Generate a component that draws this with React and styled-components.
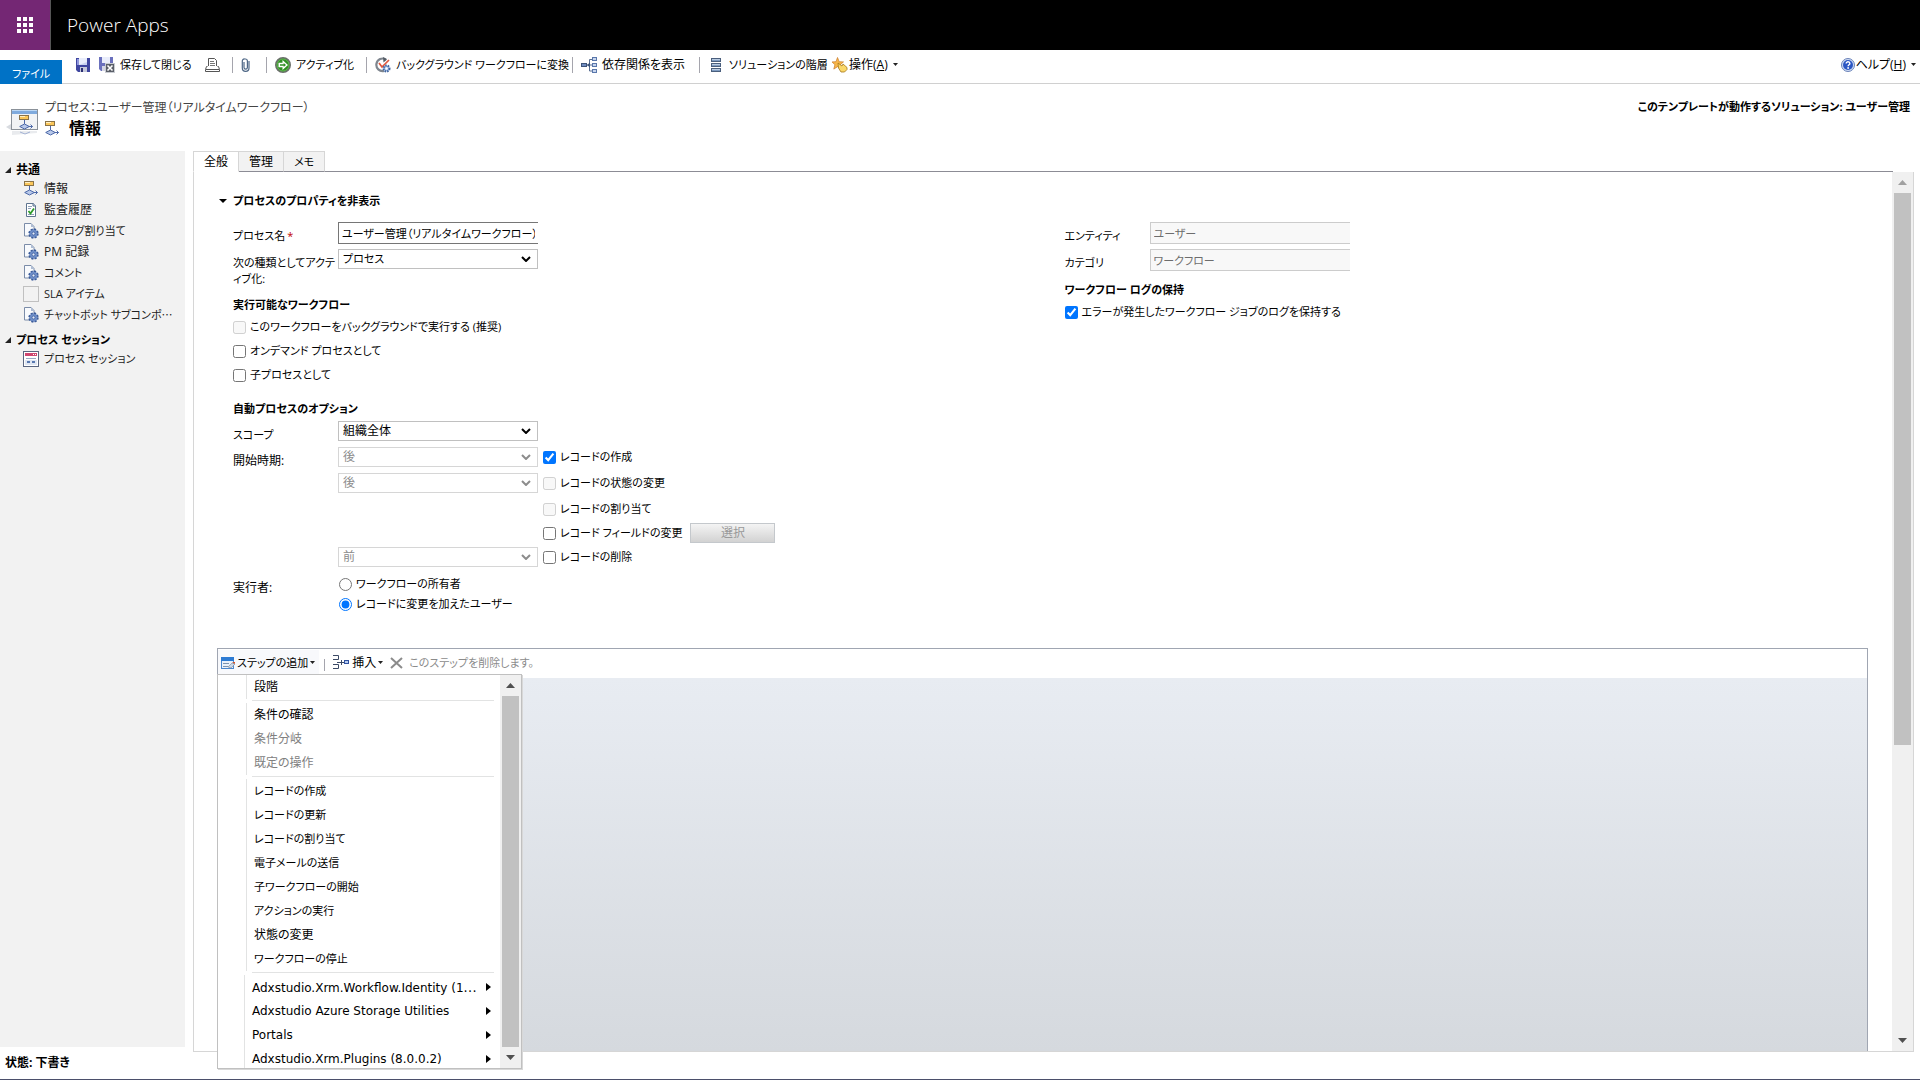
import React, { useState } from "react";
import styled, { createGlobalStyle, css } from "styled-components";

const commonLinks = [
	{ icon: "flow", label: "情報" },
	{ icon: "audit", label: "監査履歴" },
	{ icon: "gear", label: "カタログ割り当て" },
	{ icon: "gear", label: "PM 記録" },
	{ icon: "gear", label: "コメント" },
	{ icon: "empty", label: "SLA アイテム" },
	{ icon: "gear", label: "チャットボット サブコンポ", more: true },
];

const stepGroups = [
	[{ label: "段階" }],
	[{ label: "条件の確認" }, { label: "条件分岐", disabled: true }, { label: "既定の操作", disabled: true }],
	[
		{ label: "レコードの作成" },
		{ label: "レコードの更新" },
		{ label: "レコードの割り当て" },
		{ label: "電子メールの送信" },
		{ label: "子ワークフローの開始" },
		{ label: "アクションの実行" },
		{ label: "状態の変更" },
		{ label: "ワークフローの停止" },
	],
	[
		{ label: "Adxstudio.Xrm.Workflow.Identity (1", more: true, sub: true },
		{ label: "Adxstudio Azure Storage Utilities", sub: true },
		{ label: "Portals", sub: true },
		{ label: "Adxstudio.Xrm.Plugins (8.0.0.2)", sub: true },
	],
];

const fontSize = (text) => (/[ァ-ヶ]/.test(text) ? 11 : 12);

/* ---------- icons ---------- */

const Svg = ({ w = 16, h = 16, box, children }) => (
	<svg width={w} height={h} viewBox={box || `0 0 ${w} ${h}`} aria-hidden='true'>
		{children}
	</svg>
);

const WaffleIcon = () => (
	<Svg w={16} h={16}>
		{[0, 6, 12].map((y) => [0, 6, 12].map((x) => <rect key={`${x}${y}`} x={x} y={y} width='4' height='4' fill='#fff' />))}
	</Svg>
);

const SaveIcon = () => (
	<Svg w={14} h={14}>
		<path d='M0 0h14v14H2l-2-2z' fill='#3f46a0' />
		<path d='M1 1h2v6H1z' fill='#8f96dc' />
		<rect x='3' y='0' width='8' height='7' fill='#e9edfb' />
		<path d='M3 7h8V4z' fill='#c9d2f0' />
		<rect x='4' y='9' width='7' height='5' fill='#c5c8da' />
		<rect x='5' y='10' width='2' height='4' fill='#2b2f73' />
	</Svg>
);

const SaveCloseIcon = () => (
	<Svg w={16} h={16}>
		<path d='M0 0h14v14H2l-2-2z' fill='#6a70bd' />
		<rect x='3' y='0' width='8' height='6' fill='#e9edfb' />
		<rect x='3' y='9' width='5' height='5' fill='#d5d7e5' />
		<rect x='6.500' y='6.500' width='9' height='9' fill='#5a5f68' stroke='#c9ccd2' />
		<path d='M8.500 8.500l5 5m0-5l-5 5' stroke='#fff' strokeWidth='1.600' />
	</Svg>
);

const PrintIcon = () => (
	<Svg w={15} h={14}>
		<path d='M3.500 8V.5h6l2 2V8' fill='#fff' stroke='#555' />
		<path d='M5 3.500h4M5 5.500h5M5 7.500h5' stroke='#777' />
		<path d='M2.500 8.500h-1l-1 3v2h14v-2l-1-3h-1' fill='none' stroke='#555' />
		<path d='M1 11.500h13' stroke='#555' />
	</Svg>
);

const ClipIcon = () => (
	<Svg w={10} h={14}>
		<path
			d='M3 4v5.500a1.700 1.700 0 0 0 3.400 0V3a2 2 0 0 0-2-2h-.8a2 2 0 0 0-2.300 2v7a3.200 3.200 0 0 0 6.700 0V3'
			fill='none'
			stroke='#4d6685'
			strokeWidth='1.200'
		/>
	</Svg>
);

const ActivateIcon = () => (
	<Svg w={16} h={16}>
		<circle cx='8' cy='8' r='7.200' fill='#2f8f23' stroke='#6b6f6b' strokeWidth='1.600' />
		<circle cx='8' cy='8' r='6' fill='none' stroke='#6fbf5e' strokeWidth='.8' />
		<path d='M3.500 5.800h4V3L13 8l-5.500 5v-2.800h-4z' fill='#fff' />
		<path d='M5 7.300h3.700V6L11 8l-2.300 2V8.700H5z' fill='#2f8f23' />
	</Svg>
);

const ConvertIcon = () => (
	<Svg w={16} h={16}>
		<path d='M11 2.500A6.300 6.300 0 1 0 9 14' fill='none' stroke='#7e858e' strokeWidth='2.200' />
		<path d='M8 0l4 2.500-3.500 3z' fill='#555c66' />
		<path d='M4 6l3 4 7-7' fill='none' stroke='#e0563c' strokeWidth='1.700' />
		<circle cx='11.500' cy='11.500' r='3' fill='#9db7e2' stroke='#41659f' strokeWidth='2' strokeDasharray='1.500 1' />
		<circle cx='11.500' cy='11.500' r='1.200' fill='#fff' />
	</Svg>
);

const DependIcon = () => (
	<Svg w={16} h={16}>
		<path d='M5 8h6M8.500 2.500V14M8.500 2.500H11M8.500 14H11' fill='none' stroke='#5a6f92' />
		<path d='M6 8l3-2.500v5z' fill='#3d5378' />
		<rect x='.5' y='6.500' width='5' height='3' fill='#708cc0' stroke='#3d5378' />
		{[0, 6, 12].map((y) => (
			<rect key={y} x='11.500' y={y + 0.5} width='4' height='3' fill='#c8d6ee' stroke='#5a77ab' />
		))}
	</Svg>
);

const LayersIcon = () => (
	<Svg w={16} h={14} box='-3 0 16 14'>
		{[0, 5, 10].map((y) => (
			<g key={y}>
				<rect x='.5' y={y + 0.5} width='9' height='3' fill='#7e9bc0' stroke='#4a5f7d' />
				<path d={`M1 ${y + 1.500}h8`} stroke='#b8cbe2' />
			</g>
		))}
	</Svg>
);

const ActionIcon = () => (
	<Svg w={16} h={16}>
		<path d='M5.500.5l1.700 4.200 4.300.2-3.300 2.900 1.200 4.300-3.900-2.400-3.700 2.400 1.100-4.300L0 4.900l4-.2z' fill='#f7b64a' stroke='#c87a2a' strokeWidth='.7' />
		<path d='M6 6l4 3 1-2 4 3.500v2L12.500 15H9L6.500 11z' fill='#fbd869' stroke='#a4761c' strokeWidth='.8' />
	</Svg>
);

const HelpIcon = () => (
	<Svg w={14} h={14}>
		<circle cx='7' cy='7' r='6.500' fill='#cfdcf5' stroke='#6a82b8' />
		<circle cx='7' cy='7' r='5' fill='#2c57c4' />
		<path d='M5.200 5.500c0-2.400 3.700-2.300 3.700 0 0 1.300-1.800 1.300-1.800 2.700' fill='none' stroke='#fff' strokeWidth='1.400' />
		<circle cx='7.100' cy='10' r='.9' fill='#fff' />
	</Svg>
);

const flowShape = (
	<g>
		<rect x='.5' y='.5' width='9' height='4' fill='#fbc75a' stroke='#8a7348' />
		<path d='M1 1.500h5' stroke='#fff0c4' />
		<path d='M5.500 5v4M9 11.500h4.500M11.500 9.500l2 2-2 2' fill='none' stroke='#4c68a8' />
		<path d='M.7 11.500L5.500 9l4.800 2.500L5.500 14z' fill='#b9c9ea' stroke='#4c68a8' />
	</g>
);

const FlowIcon = () => (
	<Svg w={14} h={15}>
		{flowShape}
	</Svg>
);

const AuditIcon = () => (
	<Svg w={14} h={14}>
		<path d='M2.500.5h7l2 2v11h-9z' fill='#fff' stroke='#5e748f' />
		<path d='M9 0v3h3' fill='#c6d2e2' stroke='#5e748f' />
		<path d='M4 3.500h4M4 5.500h3M4 11.500h6' stroke='#8fa1b8' />
		<path d='M4.500 8l2 2.500L10 5.500' fill='none' stroke='#2e9b2a' strokeWidth='1.800' />
	</Svg>
);

const GearIcon = () => (
	<Svg w={15} h={16}>
		<path d='M.5.500h6.500l3 3V13H.5z' fill='#f8fafd' stroke='#7b8ca8' />
		<path d='M7 0v4h3.500z' fill='#aebcd3' />
		<circle cx='9.500' cy='10.500' r='4.200' fill='#6f8fc9' stroke='#3c5c9a' strokeWidth='2' strokeDasharray='2 1.300' />
		<circle cx='9.500' cy='10.500' r='3.500' fill='#6f8fc9' />
		<circle cx='9.500' cy='10.500' r='1.500' fill='#e6edf9' stroke='#3c5c9a' strokeWidth='.8' />
	</Svg>
);

const EmptyIcon = () => (
	<Svg w={16} h={16}>
		<rect x='.5' y='.5' width='15' height='15' fill='none' stroke='#c0c0c0' />
	</Svg>
);

const SessionIcon = () => (
	<Svg w={16} h={16}>
		<rect x='.5' y='.5' width='15' height='15' fill='#fff' stroke='#5a6680' />
		<rect x='2' y='2' width='12' height='3' fill='#cf4770' />
		<path d='M10 3.500h1M12 3.500h1' stroke='#fff' />
		<path d='M3 7.500h10' stroke='#9aa9c4' />
		<rect x='2' y='9' width='12' height='5' fill='#dfe6f2' />
		<rect x='4' y='10' width='3' height='2' fill='#5878b0' />
		<rect x='9' y='10' width='3' height='2' fill='#5878b0' />
	</Svg>
);

const ProcessIcon = () => (
	<Svg w={32} h={28}>
		<path d='M0 18l5-3v6z' fill='#d8dbe0' />
		<rect x='5.500' y='.5' width='26' height='20' fill='#f1f3f5' stroke='#8a9199' />
		<rect x='6' y='1' width='25' height='4' fill='#7faadd' />
		<path d='M6 1.500h25' stroke='#bcd8f5' />
		<g transform='translate(13 6)'>{flowShape}</g>
		<path d='M6 22h25v2l-25 2z' fill='#e9ebee' />
		<path d='M14 23l5 2 5-2' fill='none' stroke='#a3b2d4' />
	</Svg>
);

const StepIcon = () => (
	<Svg w={14} h={14}>
		<rect x='.5' y='1.500' width='12' height='11' fill='#eaf1fa' stroke='#4b87cf' />
		<rect x='0' y='1' width='13' height='4' fill='#2d7bd3' />
		<path d='M2 7.500h6M2 10.500h5' stroke='#7c93b0' />
		<path d='M7 11l4-4 3 1-4 4z' fill='#c9d6e8' stroke='#7a8796' strokeWidth='.6' />
		<path d='M11 6h3v2z' fill='#d8562b' />
	</Svg>
);

const InsertIcon = () => (
	<Svg w={17} h={15}>
		<path d='M0 .5h5.500v4H0M0 9.500h5.500v4H0' fill='none' stroke='#3c4a66' />
		<path d='M4 7.500h7M8.500 5v5' stroke='#3c4a66' />
		<rect x='11.500' y='5.500' width='4' height='3' fill='#b8cdf0' stroke='#2f51a0' />
	</Svg>
);

const CrossIcon = () => (
	<Svg w={13} h={12}>
		<path d='M1 1l11 10M12 1L1 11' stroke='#8b8b8b' strokeWidth='2' />
	</Svg>
);

const Triangle = ({ dir = "down", w = 6, h = 4, fill = "#222" }) => {
	const points = {
		down: `0,0 ${w},0 ${w / 2},${h}`,
		up: `0,${h} ${w},${h} ${w / 2},0`,
		right: `0,0 ${w},${h / 2} 0,${h}`,
		corner: `${w},0 ${w},${h} 0,${h}`,
	};
	return (
		<Svg w={w} h={h}>
			<polygon points={points[dir]} fill={fill} />
		</Svg>
	);
};

const sideIcons = { flow: FlowIcon, audit: AuditIcon, gear: GearIcon, empty: EmptyIcon, session: SessionIcon };

/* ---------- small parts ---------- */

function SelectBox({ id, value, disabled }) {
	return (
		<SelectWrap $disabled={disabled}>
			<Select id={id} defaultValue={value} disabled={disabled} aria-label={id ? undefined : value} $size={fontSize(value)}>
				<option>{value}</option>
			</Select>
			<Svg w={10} h={6}>
				<path d='M1 1l4 4 4-4' fill='none' stroke='currentColor' strokeWidth='2' />
			</Svg>
		</SelectWrap>
	);
}

function CheckItem({ label, checked, disabled }) {
	return (
		<CheckLabel>
			<input type='checkbox' defaultChecked={checked} disabled={disabled} />
			{label}
		</CheckLabel>
	);
}

function ScrollBar({ muted, thumb }) {
	return (
		<Scroll>
			<ScrollButton type='button' aria-label='上へ'>
				<Triangle dir='up' w={9} h={5} fill={muted ? "#a0a0a0" : "#505050"} />
			</ScrollButton>
			<ScrollTrack>
				<ScrollThumb $size={thumb} />
			</ScrollTrack>
			<ScrollButton type='button' aria-label='下へ'>
				<Triangle w={9} h={5} fill='#505050' />
			</ScrollButton>
		</Scroll>
	);
}

function SideItem({ icon, label, more }) {
	const Icon = sideIcons[icon];
	return (
		<SideLink href='#' $size={fontSize(label)}>
			<IconSlot><Icon /></IconSlot>
			<span>{label}{more && <Dots>⋯</Dots>}</span>
		</SideLink>
	);
}

function StepMenu() {
	return (
		<Menu>
			<MenuList>
				{stepGroups.map((group, i) => (
					<MenuGroup key={i}>
						{group.map((item) => (
							<li key={item.label}>
								<MenuItem type='button' disabled={item.disabled} $sub={item.sub} $size={fontSize(item.label)}>
									<span>{item.label}{item.more && <Dots>⋯</Dots>}</span>
									{item.sub && <Triangle dir='right' w={5} h={8} fill='#000' />}
								</MenuItem>
							</li>
						))}
					</MenuGroup>
				))}
			</MenuList>
			<ScrollBar thumb={100} />
		</Menu>
	);
}

function App() {
	const [tab, setTab] = useState("全般");

	return (
		<Page>
			<GlobalStyle />
			<TopBar>
				<WaffleButton type='button' aria-label='アプリ起動ツール'>
					<WaffleIcon />
				</WaffleButton>
				<Brand>Power Apps</Brand>
			</TopBar>

			<Ribbon>
				<FileTab type='button'>ファイル</FileTab>
				<Tools>
					<ToolButton type='button' aria-label='保存' $w={23}><SaveIcon /></ToolButton>
					<ToolButton type='button' $w={106}><SaveCloseIcon />保存して閉じる</ToolButton>
					<ToolButton type='button' aria-label='印刷' $w={27}><PrintIcon /></ToolButton>
					<Divider />
					<ToolButton type='button' aria-label='添付' $w={25}><ClipIcon /></ToolButton>
					<Divider />
					<ToolButton type='button' $w={91}><ActivateIcon />アクティブ化</ToolButton>
					<Divider />
					<ToolButton type='button' $w={197}><ConvertIcon />バックグラウンド ワークフローに変換</ToolButton>
					<Divider />
					<ToolButton type='button' $w={118} $large><DependIcon />依存関係を表示</ToolButton>
					<Divider />
					<ToolButton type='button' $w={124}><LayersIcon />ソリューションの階層</ToolButton>
					<ToolButton type='button' $tight $large>
						<ActionIcon /><span>操作(<u>A</u>)</span><Triangle w={5} h={3} />
					</ToolButton>
				</Tools>
				<ToolButton type='button' $tight $large>
					<HelpIcon /><span>ヘルプ(<u>H</u>)</span><Triangle w={5} h={3} />
				</ToolButton>
			</Ribbon>

			<TitleBar>
				<ProcessIcon />
				<TitleText>
					<Crumb>プロセス：ユーザー管理（リアルタイムワークフロー）</Crumb>
					<PageTitle><FlowIcon />情報</PageTitle>
				</TitleText>
				<Solution>このテンプレートが動作するソリューション: ユーザー管理</Solution>
			</TitleBar>

			<Body>
				<SideNav>
					<SideHeading $size={12}><Triangle dir='corner' w={6} h={6} />共通</SideHeading>
					{commonLinks.map((link) => (
						<SideItem key={link.label} {...link} />
					))}
					<SideHeading $size={11} $next><Triangle dir='corner' w={6} h={6} />プロセス セッション</SideHeading>
					<SideItem icon='session' label='プロセス セッション' />
				</SideNav>

				<Main>
					<Tabs>
						{["全般", "管理", "メモ"].map((name) => (
							<Tab key={name} type='button' $active={tab === name} $size={fontSize(name)} onClick={() => setTab(name)}>{name}</Tab>
						))}
						<TabRest />
					</Tabs>
					<Pane>
						<Content>
							<SectionToggle type='button'><Triangle w={8} h={4} fill='#000' />プロセスのプロパティを非表示</SectionToggle>
							<Columns>
								<div>
									<Field $h={27}>
										<Label htmlFor='name'>プロセス名<Required>*</Required></Label>
										<TextInput id='name' defaultValue='ユーザー管理（リアルタイムワークフロー）' />
									</Field>
									<Field $h={46}>
										<Label htmlFor='kind'>次の種類としてアクテ<br />ィブ化:</Label>
										<SelectBox id='kind' value='プロセス' />
									</Field>
									<GroupTitle>実行可能なワークフロー</GroupTitle>
									<CheckList>
										<CheckItem label='このワークフローをバックグラウンドで実行する (推奨)' disabled />
										<CheckItem label='オンデマンド プロセスとして' />
										<CheckItem label='子プロセスとして' />
									</CheckList>
									<GroupTitle>自動プロセスのオプション</GroupTitle>
									<Field>
										<Label htmlFor='scope'>スコープ</Label>
										<SelectBox id='scope' value='組織全体' />
									</Field>
									<Field>
										<Label as='span' $large>開始時期:</Label>
										<SelectBox value='後' disabled />
										<CheckItem label='レコードの作成' checked />
									</Field>
									<Field>
										<span />
										<SelectBox value='後' disabled />
										<CheckItem label='レコードの状態の変更' disabled />
									</Field>
									<Field $h={24}>
										<span />
										<span />
										<CheckItem label='レコードの割り当て' disabled />
									</Field>
									<Field $h={24}>
										<span />
										<span />
										<Inline>
											<CheckItem label='レコード フィールドの変更' />
											<PickButton type='button' disabled>選択</PickButton>
										</Inline>
									</Field>
									<Field>
										<span />
										<SelectBox value='前' disabled />
										<CheckItem label='レコードの削除' />
									</Field>
									<RunAs>
										<Label as='span' $large>実行者:</Label>
										<div>
											<RadioLabel><input type='radio' name='runas' />ワークフローの所有者</RadioLabel>
											<RadioLabel><input type='radio' name='runas' defaultChecked />レコードに変更を加えたユーザー</RadioLabel>
										</div>
									</RunAs>
								</div>
								<div>
									<Field $narrow $h={27}>
										<Label htmlFor='entity'>エンティティ</Label>
										<TextInput id='entity' defaultValue='ユーザー' disabled />
									</Field>
									<Field $narrow $h={31}>
										<Label htmlFor='category'>カテゴリ</Label>
										<TextInput id='category' defaultValue='ワークフロー' disabled />
									</Field>
									<GroupTitle>ワークフロー ログの保持</GroupTitle>
									<CheckItem label='エラーが発生したワークフロー ジョブのログを保持する' checked />
								</div>
							</Columns>

							<StepPanel>
								<StepTools>
									<StepButton type='button' $open><StepIcon />ステップの追加<Triangle w={5} h={3} /></StepButton>
									<Divider $short />
									<StepButton type='button' $large><InsertIcon />挿入<Triangle w={5} h={3} /></StepButton>
									<StepButton type='button' disabled><CrossIcon />このステップを削除します。</StepButton>
								</StepTools>
								<StepCanvas />
								<StepMenu />
							</StepPanel>
						</Content>
						<ScrollBar muted thumb={66} />
					</Pane>
				</Main>
			</Body>

			<StatusBar>状態: 下書き</StatusBar>
		</Page>
	);
}

export default App;

const GlobalStyle = createGlobalStyle`
	* {
		box-sizing: border-box;
	}
	body {
		margin: 0;
		background: #fff;
		color: #000;
		font: 11px/16px "Open Sans", "Noto Sans CJK JP", sans-serif;
		font-feature-settings: "palt";
	}
	button, input, select {
		margin: 0;
		font: inherit;
		color: inherit;
		font-feature-settings: inherit;
	}
	button {
		padding: 0;
		border: 0;
		background: none;
		white-space: nowrap;
	}
	svg {
		display: block;
		flex: none;
	}
`;

const Page = styled.div`
	display: flex;
	flex-direction: column;
	height: 100vh;
	border-bottom: 1px solid #4b4f6b;
`;

const TopBar = styled.header`
	display: flex;
	align-items: center;
	flex: none;
	height: 50px;
	background: #000;
`;

const WaffleButton = styled.button`
	display: grid;
	place-items: center;
	width: 51px;
	height: 50px;
	border-right: 1px solid #555;
	background: #742774;
`;

const Brand = styled.span`
	padding-left: 16px;
	color: #fff;
	font-size: 19px;
	font-weight: 300;
	line-height: 50px;
`;

const Ribbon = styled.div`
	display: flex;
	align-items: flex-start;
	flex: none;
	height: 34px;
	border-bottom: 1px solid #d0d0d0;
`;

const FileTab = styled.button`
	width: 62px;
	height: 24px;
	margin-top: 10px;
	padding-top: 4px;
	background: #0072c6;
	color: #fff;
`;

const Tools = styled.div`
	display: flex;
	align-items: center;
	flex: 1;
	padding-left: 14px;
`;

const ToolButton = styled.button`
	display: flex;
	align-items: center;
	gap: ${({ $tight }) => ($tight ? 1 : 5)}px;
	width: ${({ $w }) => ($w ? `${$w}px` : "auto")};
	height: 29px;
	font-size: ${({ $large }) => ($large ? 12 : 11)}px;

	svg:last-child:not(:first-child) {
		margin: 0 4px;
	}
`;

const Divider = styled.span`
	width: 1px;
	height: ${({ $short }) => ($short ? 12 : 16)}px;
	margin: ${({ $short }) => ($short ? "4px 5px 0" : "0 8px 0 0")};
	background: #a5a5ad;
`;

const TitleBar = styled.div`
	display: flex;
	align-items: flex-start;
	flex: none;
	height: 67px;
	padding: 14px 10px 0 6px;

	> svg {
		margin-top: 11px;
	}
`;

const TitleText = styled.div`
	flex: 1;
	padding-left: 7px;
`;

const Crumb = styled.div`
	color: #444;
	font-size: 12px;
	line-height: 20px;
`;

const PageTitle = styled.h1`
	display: flex;
	align-items: center;
	gap: 10px;
	margin: 0;
	font-size: 16px;
	line-height: 20px;
`;

const Solution = styled.div`
	font-weight: bold;
	line-height: 18px;
`;

const Body = styled.div`
	display: flex;
	flex: 1;
	min-height: 0;
`;

const SideNav = styled.nav`
	width: 185px;
	flex: none;
	padding-top: 10px;
	background: #f2f2f2;
`;

const SideHeading = styled.h2`
	display: flex;
	align-items: center;
	gap: 5px;
	margin: ${({ $next }) => ($next ? "6px 0 0" : 0)};
	padding-left: 5px;
	font-size: ${({ $size }) => $size}px;
	line-height: 17px;
`;

const SideLink = styled.a`
	display: flex;
	align-items: center;
	gap: 5px;
	height: 21px;
	padding-left: 23px;
	color: #222;
	font-size: ${({ $size }) => $size}px;
	text-decoration: none;
	white-space: nowrap;
`;

/* keeps the dots at mid height */
const Dots = styled.span`
	font-family: "Noto Sans CJK JP", sans-serif;
`;

const IconSlot = styled.span`
	display: grid;
	place-items: center;
	flex: none;
	width: 16px;
`;

const Main = styled.main`
	display: flex;
	flex-direction: column;
	flex: 1;
	min-width: 0;
	margin: 0 6px 0 8px;
`;

const Tabs = styled.div`
	display: flex;
	flex: none;
	height: 21px;
`;

const Tab = styled.button`
	padding: 0 10px;
	border: 1px solid #d6d6d6;
	border-left-width: ${({ $active }) => ($active ? 1 : 0)}px;
	border-bottom-color: ${({ $active }) => ($active ? "transparent" : "#8c8c95")};
	background: ${({ $active }) => ($active ? "#fff" : "#f2f2f2")};
	font-size: ${({ $size }) => $size}px;
`;

const TabRest = styled.span`
	flex: 1;
	margin-right: 21px;
	border-bottom: 1px solid #8c8c95;
`;

const Pane = styled.section`
	display: flex;
	flex: 1;
	min-height: 0;
	margin-bottom: -5px;
	border: 1px solid #d6d6d6;
	border-top: 0;
`;

const Content = styled.div`
	display: flex;
	flex-direction: column;
	flex: 1;
	min-width: 0;
	padding: 21px 24px 0 23px;
`;

const SectionToggle = styled.button`
	display: flex;
	align-items: center;
	align-self: flex-start;
	gap: 6px;
	padding-left: 2px;
	font-weight: bold;
`;

const Columns = styled.div`
	display: grid;
	grid-template-columns: 1fr 1fr;
	padding: 13px 0 0 16px;

	> div:last-child {
		padding-left: 14px;
	}
`;

const Field = styled.div`
	display: grid;
	grid-template-columns: ${({ $narrow }) => ($narrow ? 85 : 105)}px 200px 1fr;
	align-items: start;
	height: ${({ $h }) => $h || 26}px;
`;

const Label = styled.label`
	padding-top: 6px;
	font-size: ${({ $large }) => ($large ? 12 : 11)}px;
	white-space: nowrap;
`;

const Required = styled.span`
	padding-left: 2px;
	color: #c00000;
`;

const TextInput = styled.input`
	width: 100%;
	height: 22px;
	padding: 0 3px;
	border: 1px solid #767676;
	border-right: 0;
	background: #fff;

	&:disabled {
		border-color: #ccc;
		background: #f8f8f8;
		color: #6d6d6d;
	}
`;

/* the arrow is laid over the native control */
const SelectWrap = styled.span`
	position: relative;
	display: block;
	height: 20px;
	color: ${({ $disabled }) => ($disabled ? "#8c8c8c" : "#000")};

	svg {
		position: absolute;
		top: 7px;
		right: 7px;
		pointer-events: none;
	}
`;

const Select = styled.select`
	display: block;
	width: 100%;
	height: 20px;
	padding: 0 4px;
	border: 1px solid ${({ disabled }) => (disabled ? "#d6d6d6" : "#c0c0c0")};
	background: #fff;
	font-size: ${({ $size }) => $size}px;
	appearance: none;
	opacity: 1;
`;

const GroupTitle = styled.h3`
	margin: 0;
	padding: 1px 0 3px;
	font-size: 11px;
	line-height: 18px;
`;

const CheckLabel = styled.label`
	display: flex;
	align-items: center;
	gap: 4px;
	height: 20px;
	white-space: nowrap;

	input {
		width: 13px;
		height: 13px;
	}

	${Field} & {
		padding-left: 5px;
	}
`;

const CheckList = styled.div`
	display: grid;
	gap: 4px;
	padding-bottom: 14px;
`;

const Inline = styled.span`
	display: flex;
	gap: 8px;
`;

const PickButton = styled.button`
	width: 85px;
	height: 20px;
	border: 1px solid #c4c8cc;
	background: linear-gradient(#f4f4f4, #d2d2d2);
	color: #999;
	font-size: 12px;
`;

const RunAs = styled.div`
	display: grid;
	grid-template-columns: 105px 1fr;
	padding-top: 1px;
`;

const RadioLabel = styled.label`
	display: flex;
	align-items: center;
	gap: 4px;
	height: 20px;
	padding-left: 1px;

	input {
		width: 13px;
		height: 13px;
	}
`;

const StepPanel = styled.div`
	position: relative;
	display: flex;
	flex-direction: column;
	flex: 1;
	margin-top: 34px;
	border: 1px solid #a0a6b2;
	border-bottom: 0;
`;

const StepTools = styled.div`
	display: flex;
	align-items: center;
	height: 29px;
	padding-bottom: 2px;
`;

const StepButton = styled.button`
	display: flex;
	align-items: center;
	gap: 2px;
	height: 25px;
	padding: 0 4px 0 3px;
	background: ${({ $open }) => ($open ? "#f8f9fc" : "none")};
	font-size: ${({ $large }) => ($large ? 12 : 11)}px;

	&:disabled {
		gap: 6px;
		color: #8b8b8b;
	}
`;

const StepCanvas = styled.div`
	flex: 1;
	background: linear-gradient(#e8ecf2, #d5d9de);
`;

const Menu = styled.div`
	position: absolute;
	top: 25px;
	left: -1px;
	display: flex;
	width: 305px;
	height: 395px;
	border: 1px solid #c0c0c0;
	background: #fff;
	box-shadow: 1px 1px 0 #d8d8d8;
	overflow: hidden;
`;

const MenuList = styled.div`
	flex: 1;
	min-width: 0;
	padding-right: 6px;
`;

const MenuGroup = styled.ul`
	margin: 0;
	padding: 0;
	list-style: none;

	& + &::before {
		content: "";
		display: block;
		height: 1px;
		margin: 1px 0 2px 34px;
		background: #e2e3e3;
	}
`;

const subItem = css`
	width: calc(100% - 26px);
	margin-left: 26px;
	padding: 0 3px 0 7px;
	font-family: "DejaVu Sans", sans-serif;
`;

const MenuItem = styled.button`
	display: flex;
	align-items: center;
	justify-content: space-between;
	width: calc(100% - 28px);
	height: 24px;
	margin-left: 28px;
	padding: 0 0 0 7px;
	border-left: 1px solid #e2e3e3;
	font-size: ${({ $size }) => $size}px;
	text-align: left;
	${({ $sub }) => $sub && subItem}

	&:disabled {
		color: #808080;
	}
`;

const Scroll = styled.div`
	display: flex;
	flex-direction: column;
	flex: none;
	width: 21px;
	background: #f0f0f0;
`;

const ScrollButton = styled.button`
	display: grid;
	place-items: center;
	height: 21px;
`;

const ScrollTrack = styled.div`
	flex: 1;
	padding: 0 2px;
`;

const ScrollThumb = styled.div`
	height: ${({ $size }) => $size}%;
	background: #c1c1c1;
`;

const StatusBar = styled.footer`
	flex: none;
	height: 32px;
	padding: 8px 5px;
	font-size: 12px;
	font-weight: bold;
`;
